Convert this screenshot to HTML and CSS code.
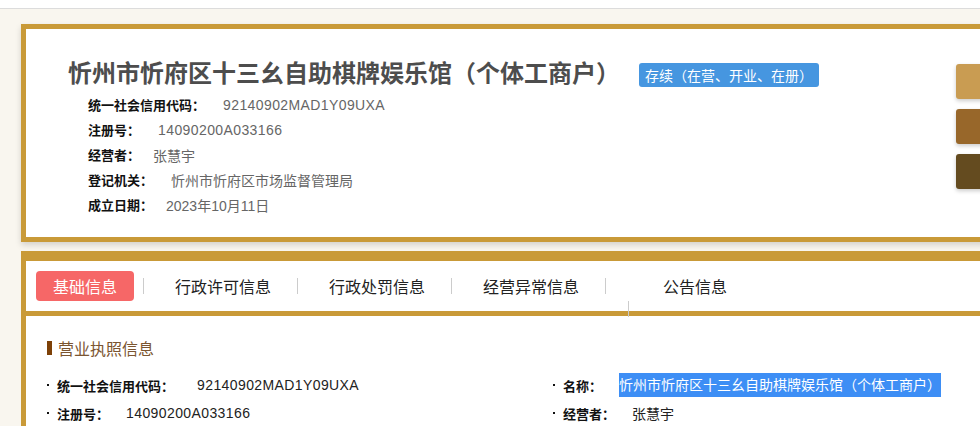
FILE: index.html
```html
<!DOCTYPE html>
<html lang="zh-CN">
<head>
    <meta charset="UTF-8">
    <meta name="viewport" content="width=device-width, initial-scale=1.0">
    <title>企业信息</title>
    <link rel="stylesheet" href="styles.css">
</head>
<body>

<div class="topbar"></div>

<div class="page">
    <div class="card">
        <div class="title-row">
            <h1 class="title">忻州市忻府区十三幺自助棋牌娱乐馆（个体工商户）</h1>
            <span class="badge">存续（在营、开业、在册）</span>
        </div>
        <div class="info">
            <div class="info-row"><span class="label">统一社会信用代码：</span><span class="value num gap-l">92140902MAD1Y09UXA</span></div>
            <div class="info-row"><span class="label">注册号：</span><span class="value num gap-l">14090200A033166</span></div>
            <div class="info-row"><span class="label">经营者：</span><span class="value">张慧宇</span></div>
            <div class="info-row"><span class="label">登记机关：</span><span class="value gap-l">忻州市忻府区市场监督管理局</span></div>
            <div class="info-row"><span class="label">成立日期：</span><span class="value">2023年10月11日</span></div>
        </div>
    </div>

    <div class="side-nav">
        <div class="side-btn light"></div>
        <div class="side-btn mid"></div>
        <div class="side-btn dark"></div>
    </div>

    <div class="panel">
        <div class="tabs">
            <span class="tab active">基础信息</span>
            <span class="tab">行政许可信息</span>
            <span class="tab">行政处罚信息</span>
            <span class="tab">经营异常信息</span>
            <span class="tab wide">公告信息</span>
            <span class="tick"></span>
        </div>
        <div class="content">
            <h2 class="section-title">营业执照信息</h2>
            <div class="fields">
                <div class="field"><span class="f-label">统一社会信用代码：</span><span class="f-value num first">92140902MAD1Y09UXA</span></div>
                <div class="field"><span class="f-label">名称：</span><span class="f-value selected">忻州市忻府区十三幺自助棋牌娱乐馆（个体工商户）</span></div>
                <div class="field"><span class="f-label">注册号：</span><span class="f-value num">14090200A033166</span></div>
                <div class="field"><span class="f-label">经营者：</span><span class="f-value">张慧宇</span></div>
            </div>
        </div>
    </div>
</div>

</body>
</html>
```

FILE: styles.css
```css
/* 基础样式 */
html, body {
    overflow: hidden;
}
body {
    margin: 0;
    padding: 0;
    font-family: "Noto Sans CJK SC", "Liberation Sans", sans-serif;
    background-color: #f9f6ef;
    color: #333;
}
.topbar {
    height: 8px;
    background-color: #fff;
    border-bottom: 1px solid #dcdcdc;
}
.page {
    position: relative;
    width: 1200px;
    padding: 15px 0 0 21px;
}

/* 顶部卡片 */
.card {
    background-color: #fff;
    border: 5px solid #c99a38;
    border-right: none;
    padding: 28px 0 20px 42px;
    box-shadow: 0 3px 6px rgba(0, 0, 0, 0.15);
}
.title-row {
    display: flex;
    align-items: flex-start;
}
.title {
    margin: 0;
    font-size: 24px;
    line-height: 30px;
    font-weight: bold;
    color: #4d4d4d;
}
.badge {
    margin: 6px 0 0 19px;
    height: 24px;
    line-height: 24px;
    padding: 0 6px;
    font-size: 14px;
    color: #fff;
    background-color: #4696e0;
    border-radius: 3px;
}
.info {
    margin-top: 5px;
    padding-left: 20px;
}
.info-row {
    height: 25px;
    display: flex;
    align-items: center;
    font-size: 13px;
}
.label {
    font-weight: bold;
    color: #111;
}
.value {
    font-family: "Liberation Sans", "Noto Sans CJK SC", sans-serif;
    font-size: 14px;
    color: #666;
    margin-left: 13px;
}
.value.gap-l {
    margin-left: 18px;
}
.num {
    letter-spacing: 0.4px;
}

/* 右侧悬浮按钮 */
.side-nav {
    position: absolute;
    left: 956px;
    top: 55px;
    display: flex;
    flex-direction: column;
    gap: 10px;
}
.side-btn {
    width: 40px;
    height: 35px;
    border-radius: 3px;
    box-shadow: 0 2px 4px rgba(0, 0, 0, 0.2);
}
.side-btn.light { background-color: #c99c52; }
.side-btn.mid { background-color: #98672a; }
.side-btn.dark { background-color: #644b1f; }

/* 下方信息面板 */
.panel {
    margin-top: 9px;
    background-color: #fff;
    border-left: 5px solid #c99a38;
    border-top: 10px solid #c99a38;
}
.tabs {
    position: relative;
    height: 50px;
    border-bottom: 5px solid #c99a38;
    display: flex;
    align-items: center;
    padding-left: 10px;
}
.tab {
    font-size: 16px;
    line-height: 16px;
    color: #222;
    padding: 0 26px 0 31px;
    border-left: 1px solid #ccc;
}
.tab.active {
    margin-right: 9px;
    padding: 7px 17px;
    border: none;
    border-radius: 4px;
    background-color: #f66767;
    color: #fff;
}
.tab.wide {
    padding-left: 57px;
}
.tick {
    position: absolute;
    left: 602px;
    top: 40px;
    width: 1px;
    height: 16px;
    background-color: #ccc;
}
.content {
    padding: 25px 0 20px 21px;
}
.section-title {
    margin: 0;
    font-size: 16px;
    line-height: 24px;
    font-weight: normal;
    color: #7b5530;
    border-left: 5px solid #7d4108;
    padding-left: 6px;
    height: 14px;
    display: flex;
    align-items: center;
}
.fields {
    margin-top: 18px;
    display: grid;
    grid-template-columns: 506px 1fr;
    row-gap: 4px;
}
.field {
    height: 24px;
    display: flex;
    align-items: center;
    font-size: 13px;
}
.field::before {
    content: "";
    width: 2px;
    height: 2px;
    background-color: #111;
    margin-right: 8px;
}
.f-label {
    font-weight: bold;
    color: #111;
}
.f-value {
    font-family: "Liberation Sans", "Noto Sans CJK SC", sans-serif;
    font-size: 14px;
    margin-left: 17px;
    color: #222;
}
.f-value.first {
    margin-left: 23px;
}
.f-value.selected {
    line-height: 24px;
    background-color: #3d8ef5;
    color: #fff;
}
```
